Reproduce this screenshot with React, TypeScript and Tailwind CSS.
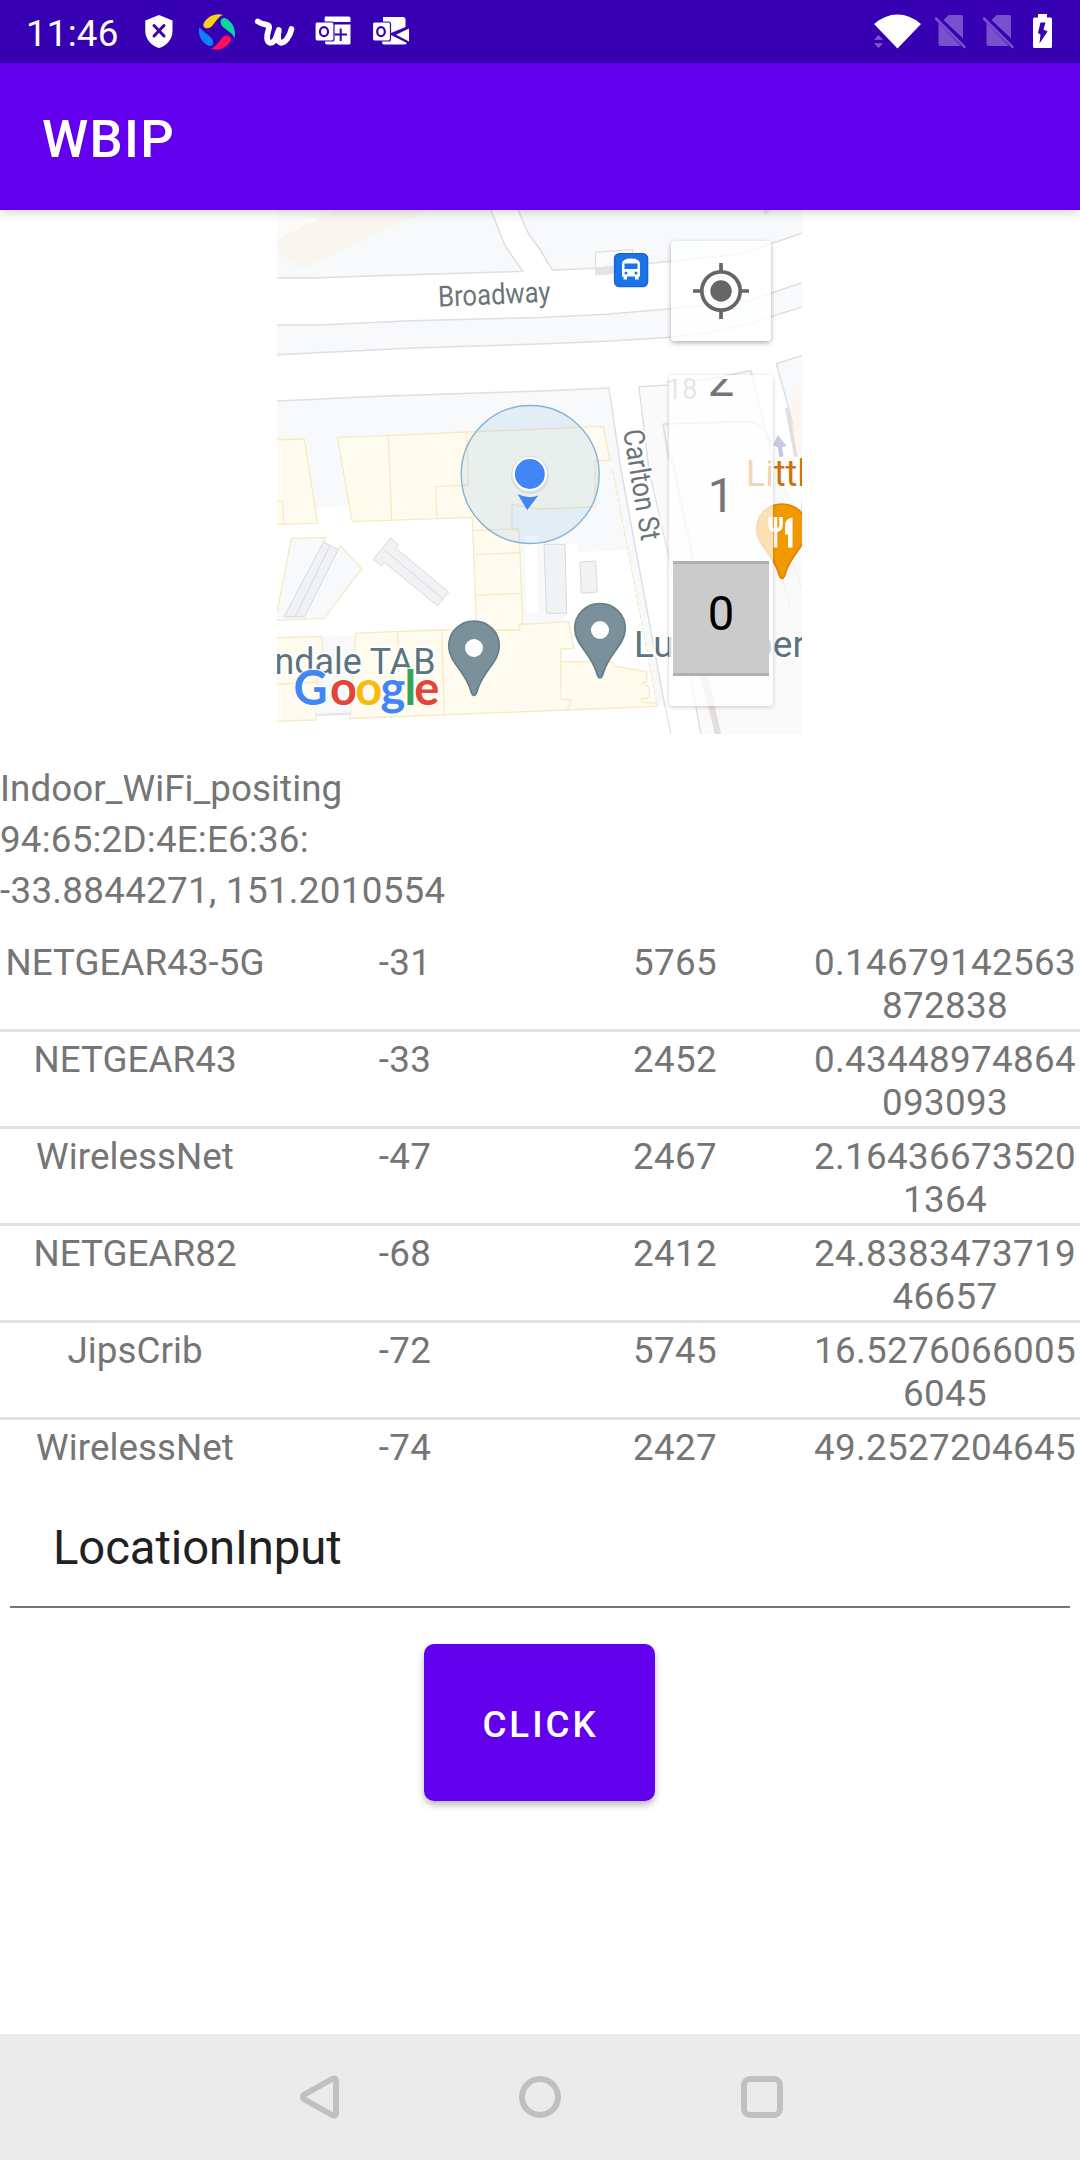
import React from "react";

const networks = [
  ["NETGEAR43-5G", "-31", "5765", "0.14679142563872838"],
  ["NETGEAR43", "-33", "2452", "0.43448974864093093"],
  ["WirelessNet", "-47", "2467", "2.164366735201364"],
  ["NETGEAR82", "-68", "2412", "24.838347371946657"],
  ["JipsCrib", "-72", "5745", "16.52760660056045"],
  ["WirelessNet", "-74", "2427", "49.2527204645"],
];

function StatusBar() {
  return (
    <div className="flex h-[63px] shrink-0 items-stretch bg-[#3700b3] pl-[26px] pr-[28px] text-white">
      <span className="w-[119px] pt-[11px] text-[36.75px] leading-[45px] tracking-[0.2px]">11:46</span>
      <svg className="h-[63px] w-[28px]" viewBox="145 0 28 63">
        <path d="M159 15 L172.500 20.500 V31 C172.500 39 167 45.500 159 48 C151 45.500 145.300 39 145.300 31 V20.500 Z" fill="#fff" />
        <path d="M154 25.500 L164 36 M164 25.500 L154 36" stroke="#3700b3" strokeWidth="3" strokeLinecap="round" />
      </svg>
      <svg className="ml-[26px] h-[63px] w-[36px]" viewBox="199 0 36 63">
        <path d="M203.500 24 C207 16 216 12.500 223 15 C218 16.500 214.500 24 211 27 C207 29.500 202.500 28 203.500 24Z" fill="#ffd01a" />
        <path d="M225 18 C232 21 236.500 29 234.500 38 C232.500 33 226 30 222 26 C219 21 221 17.500 225 18Z" fill="#0bd6a0" />
        <path d="M231 40 C228 47 219 52 211 48.500 C216 47 220 40 223 37 C227 34 231.500 36 231 40Z" fill="#ff0f5b" />
        <path d="M209 46 C202 43 197 35 199.500 27 C202 31 208 34.500 211.500 38 C215 43 213 46.500 209 46Z" fill="#0b80ff" />
      </svg>
      <svg className="ml-[20px] h-[63px] w-[40px]" viewBox="255 0 40 63" fill="none" stroke="#fff" strokeLinecap="round" strokeLinejoin="round">
        <path d="M257.800 21.500 Q262 24.500 267.500 25 Q270 25.500 268.500 30 C264 44.500 272 45.500 275.500 39 L278.800 30 C276 45 282 45 287 39 Q290.500 34 291.500 29" strokeWidth="5.800" />
      </svg>
      <svg className="ml-[20px] h-[63px] w-[37px]" viewBox="315 0 37 63">
        <path d="M325 16.500 h24 q1.500 0 1.500 1.500 v4 h-25.500 q-1 -2 0 -5.500 M325 24.500 h25.500 v18.500 q0 1.500 -1.500 1.500 h-22 q-2 0 -2 -2z" fill="#fff" />
        <path d="M334.500 34.500 h12.500 M340.700 28.500 v12.500" stroke="#3700b3" strokeWidth="2" />
        <rect x="315" y="22" width="19" height="19" rx="2" fill="#fff" stroke="#3700b3" strokeWidth="1.200" />
        <ellipse cx="324" cy="31.700" rx="4" ry="4.500" fill="none" stroke="#3700b3" strokeWidth="2.200" />
      </svg>
      <svg className="ml-[20px] h-[63px] w-[38px]" viewBox="372 0 38 63">
        <path d="M383 17 h20 q2.500 0 2.500 2.500 V27 L391 33 L383 24z M409 28.500 V41.500 L396 34.800z M382 41 L391 35 L407 43 Q406 44.500 404 44.500 H384 Q382 44.500 382 41Z" fill="#fff" />
        <rect x="372.500" y="22" width="18" height="19" rx="2" fill="#fff" stroke="#3700b3" strokeWidth="1.200" />
        <ellipse cx="381" cy="31.700" rx="3.800" ry="4.500" fill="none" stroke="#3700b3" strokeWidth="2.200" />
      </svg>
      <svg className="ml-auto h-[63px] w-[47px]" viewBox="874 0 47 63">
        <path d="M874 24 Q885 14.500 897.500 14.500 Q910 14.500 921 24 L897.500 48.500Z" fill="#fff" />
        <path d="M874 39.800 L878.500 35 L883 39.800Z M874 43.200 L878.500 48 L883 43.200Z" fill="#fff" fillOpacity=".35" />
      </svg>
      <Sim className="ml-[14px] h-[63px] w-[32px]" />
      <Sim className="ml-[16px] h-[63px] w-[32px]" />
      <svg className="ml-[18px] h-[63px] w-[19px]" viewBox="1033 0 19 63">
        <path d="M1038 14 h9 v3.500 h3.500 q1.500 0 1.500 1.500 V46.500 q0 1.500 -1.500 1.500 h-16 q-1.500 0 -1.500 -1.500 V19 q0 -1.500 1.500 -1.500 H1038Z" fill="#fff" />
        <path d="M1040.500 22.500 L1045.500 22.500 L1043.500 29.500 L1047.500 31.500 L1039.500 43.500 L1040.500 34.500 L1038 33Z" fill="#3700b3" />
      </svg>
    </div>
  );
}

function Sim({ className }: { className: string }) {
  return (
    <svg className={className} viewBox="935 0 32 63">
      <g fill="#fff" fillOpacity=".32">
        <path d="M943.500 20 L948 15.500 Q948.500 15 949.500 15 H961 Q963 15 963 17 V38.500Z" />
        <path d="M938.500 23 L960.500 45.500 Q960 46 959 46 H941 Q938.500 46 938.500 43.500Z" />
      </g>
      <path d="M936 18.500 L964.500 46.800" stroke="#fff" strokeOpacity=".32" strokeWidth="2.600" strokeLinecap="round" />
    </svg>
  );
}

function Pin({ x, y, fill, stroke }: { x: number; y: number; fill: string; stroke: string }) {
  return (
    <g transform={`translate(${x} ${y})`}>
      <path
        d="M0 1 C-14.500 1 -25.300 12 -25.300 26 C-25.300 42 -9 51 -3.500 70 Q-2 75.500 0 75.500 Q2 75.500 3.500 70 C9 51 25.300 42 25.300 26 C25.300 12 14.500 1 0 1Z"
        fill={fill}
        stroke={stroke}
        strokeWidth="1.600"
      />
    </g>
  );
}

function MapDrawing() {
  return (
    <svg className="block h-[524px] w-[525px]" viewBox="277 210 525 524" fontFamily="Roboto, sans-serif">
      <rect x="277" y="210" width="525" height="524" fill="#f8f9fb" />
      <path d="M277 210 H337 L277 240Z" fill="#fcfbf8" />
      <path d="M277 240 L337 210 H428 L390 228 L383 231 L300.700 269 L277 250Z" fill="#f9f6f0" />

      {/* roads */}
      <g fill="#fff" stroke="#dedfe3" strokeWidth="1.500">
        <path d="M270 278 L313 278 L377 275.700 L522.700 271.300 L505 245.700 L489 205 H516 L528 233 L540 249.500 L552.300 270.300 L595 268.300 L671 261.300 L740 254.300 L770.700 243.700 L810 230.500 V280 L770.700 293.300 L748 300.700 L671 308.700 L606.700 314.300 L540 317.500 L410 320.700 L320 325 L270 325Z" />
        <path d="M270 355 L413 348 L540 344 L606.700 341.300 L671 337.300 L713 332 L753 323.300 L770.700 316.700 L810 304.500 V353 L776.300 363.700 L806 470 L800 520 L775 470 L751 370.700 L720 376.700 L668 385 L639 386.700 L649 470 L669 557 L702 740 H672 L665 706.700 L621 470 L609 388 L540 391 L380 396.300 L270 401.300Z" />
      </g>
      <path d="M639.800 387.500 L668 386 L720 377.700 L750.300 371.700 L774 470 L800 530 V734 H702 L669 557 L650 470Z" fill="#fafafa" />
      <path d="M775 470 L810 530 V734 H702 L690 660Z" fill="#fafafa" />
      <path d="M700 675 H708 L721 734 H715Z M785 408 L789 407.700 L798 456.700 L794 456.700Z" fill="#e4dfdb" />
      <path d="M672 458 L693 560 M693 560 L708 675" stroke="#f0e8e4" strokeWidth="3" fill="none" />
      <path d="M802 387 Q788 398 790 408 L800 460 H802Z" fill="#fdf5ef" />
      <path d="M663 424 L748 421.500 Q765 423 772 445 M663 424 L669 460" stroke="#e8e2dc" fill="none" strokeWidth="2" />
      <path d="M760 500 L790 605 M788 545 L802 590" stroke="#f0eeec" fill="none" />

      {/* open ground */}
      <path d="M277 524 L317.700 523.300 L315.700 507.500 L348.500 505.700 L352.300 521.700 L472.300 517.300 L477 632 L277 638Z M565 544 H577 V552 L628 550 L657 705 L665 706.700 L670 734 H277 V718 L540 710 L566 613Z M525 536 L537 536 L538 613 L526 613Z" fill="#fff" />

      {/* buildings */}
      <g fill="#fffbef" stroke="#f7e9c3" strokeWidth="1.300" strokeLinejoin="round">
        <path d="M270 440 L304.300 439 L317.700 523.300 L270 524.500Z M277 501.300 H282.700 L283.700 524.300" />
        <path d="M337.300 437.300 L388 435.700 L467 432 L603.300 426.300 L610 460 L595 461 V507 L540 509 L512 504.500 V529 L519 530 L522.700 623.300 L519.500 624.300 L519.500 630 L476.700 631 L472.300 517.300 L352.300 521.700Z" />
        <path d="M388.300 435.700 L391.700 520 M436.700 518.300 L435.700 486.700 L468.500 485 L466.700 432 M472.700 530.700 L519 528.700 M474 554.700 L520 552.700 M476 595.300 L521 593.300" />
        <path d="M270 638 L321.700 636.300 L323 652 L317 685 L315.700 720 L270 721.300Z M277 684.500 L317 682" />
        <path d="M355.700 633.300 L397.700 631.300 L441.700 630 L519.500 630 L520 624.500 L540 623.300 L568.700 621.700 L573.700 648.300 L560.700 649 V661.300 L612.700 662 L614 666 L646.700 671.700 V681.700 L642 683 L649.300 687.300 V697.700 L641.300 699 L642 702.300 L656 703 L657.300 706.300 L566 710 L350 718.500Z M397.700 631.300 L398.500 672 M441.700 630 L444.300 715 M560.700 661.300 L561.300 699.300 L570.700 700 L570 706 L566 710" />
        <path d="M612.700 470 L628 550 L657 705" fill="none" strokeDasharray="5 2" />
        <path d="M291.300 538.300 L325.700 537.300 L323.300 542.700 L338.300 550 L340.700 546 L361.700 569 L324 618.300 L272 620.500 L277.500 610Z" fill="#f8f9fb" />
      </g>
      <path d="M317 686 L351 680 L350 714 L316 715Z" fill="#f8f9fb" />
      <path d="M316 715 L350 713.500" stroke="#e4e5e8" strokeWidth="2" />
      <g fill="#f1f2f4" stroke="#d9dadd">
        <path d="M323.300 542.300 L338.300 549.300 L304.700 616.700 L284 617Z M330 545.300 L295.300 616.700" />
        <path d="M390.700 538 L398.300 544.700 L395.700 548 L448.700 592 L437.300 605.700 L384.700 562.700 L381.300 566 L373.300 559.300Z M383.300 549 L442.700 598.700" />
        <path d="M544 544.300 H565 L566.700 613.300 H546.500Z M580 562 L595.700 561 L597.300 592 L581.300 593.300Z" />
        <path d="M595.500 268 V252.300 L632.500 249.500 V258" fill="#fafbfb" />
      </g>
      <path d="M595 267 H616 V274 L595 275.500Z M762 210 h8 l-4 5Z" fill="#e2e3e4" />

      {/* street labels */}
      <g fill="#6b7579" stroke="#fff" strokeWidth="4" strokeLinejoin="round" paintOrder="stroke" fontSize="29">
        <text transform="translate(438.500 306.800) rotate(-2.600)" textLength="112.500" lengthAdjust="spacingAndGlyphs">Broadway</text>
        <text transform="translate(623 431) rotate(80.600)" textLength="112" lengthAdjust="spacingAndGlyphs">Carlton St</text>
        <text x="666.500" y="399" fill="#aaa" textLength="31" lengthAdjust="spacingAndGlyphs">18</text>
      </g>

      {/* bus stop */}
      <rect x="614.600" y="253.600" width="33" height="33" rx="5" fill="#1a73e8" stroke="#1765cf" strokeWidth="1.400" />
      <path d="M622 264 Q622 258.500 631 258.500 Q640 258.500 640 264 V276.500 H638.700 V279.500 H635 V276.500 H627 V279.500 H623.500 V276.500 H622Z" fill="#fff" />
      <path d="M624.500 263.500 H637.500 V269 H624.500Z" fill="#1a73e8" />
      <circle cx="626" cy="273" r="1.500" fill="#1a73e8" />
      <circle cx="636" cy="273" r="1.500" fill="#1a73e8" />

      {/* current position */}
      <circle cx="530.200" cy="474.500" r="69" fill="#4b9fdc" fillOpacity=".13" stroke="#86b2d8" strokeWidth="1.400" />
      <circle cx="530" cy="475" r="19" fill="#000" fillOpacity=".08" />
      <circle cx="529.800" cy="474" r="17.300" fill="#fff" />
      <circle cx="529.800" cy="474" r="15" fill="#4285f4" />
      <path d="M517.500 494 Q528 499.500 538.300 495.500 L527.200 510Z" fill="#4285f4" />

      {/* places */}
      <Pin x={474} y={620} fill="#7a909b" stroke="#5f7f8b" />
      <circle cx="474" cy="648" r="9" fill="#fff" />
      <Pin x={600} y={602.500} fill="#7a909b" stroke="#5f7f8b" />
      <circle cx="600" cy="630" r="9" fill="#fff" />
      <Pin x={782} y={503} fill="#f29900" stroke="#e37f00" />
      <path d="M770 517 V525 Q770 530 775.500 530.500 V547.500 M775.500 517 V530 M781 517 V525 Q781 530 775.500 530.500" fill="none" stroke="#fff" strokeWidth="3.600" />
      <path d="M792.500 517.500 V547.500 H788 V534.500 H785 V525 Q785.500 518 792.500 517.500Z" fill="#fff" />
      <path d="M777.700 435 L786.700 446 L782 447 L783.500 456.500 L779 457 L778 447.500 L773.300 445Z" fill="#c5c9dd" />
      <g fontSize="37" stroke="#fff" strokeWidth="4" strokeLinejoin="round" paintOrder="stroke">
        <g fill="#5b7580">
          <text x="274.500" y="673.800" textLength="161" lengthAdjust="spacingAndGlyphs">ndale TAB</text>
          <text x="634" y="656.500">Lu</text>
          <text x="752" y="656.500">ber</text>
        </g>
        <text x="746" y="486" fill="#d1700d" textLength="60" lengthAdjust="spacingAndGlyphs">Littl</text>
      </g>
      <text
        x="293.500 330 355.200 380.500 404.500 414.200"
        y="705"
        fontFamily="Lato, sans-serif"
        fontWeight="700"
        fontSize="47"
        stroke="#fff"
        strokeOpacity=".8"
        strokeWidth="3"
        paintOrder="stroke"
        strokeLinejoin="round"
      >
        <tspan fill="#4285f4">G</tspan>
        <tspan fill="#e2463a">o</tspan>
        <tspan fill="#f8bb0c">o</tspan>
        <tspan fill="#4285f4">g</tspan>
        <tspan fill="#35a455">l</tspan>
        <tspan fill="#e2463a">e</tspan>
      </text>
    </svg>
  );
}

function MapPanel() {
  return (
    <div className="relative mr-[278px] ml-[277px] h-[524px] w-[525px] shrink-0 overflow-hidden">
      <MapDrawing />
      <button className="absolute top-[31px] left-[394px] flex h-[100px] w-[100px] items-center justify-center rounded-[4px] bg-white/75 shadow-[0_2px_5px_rgba(0,0,0,0.3)]">
        <svg className="h-[56px] w-[56px]" viewBox="-28 -28 56 56">
          <circle r="19.200" fill="none" stroke="#666" strokeWidth="3.700" />
          <circle r="10.700" fill="#666" />
          <path d="M-28 0 H-19 M19 0 H28 M0 -28 V-19 M0 19 V28" stroke="#666" strokeWidth="3.700" />
        </svg>
      </button>
      <div className="absolute top-[165px] left-[392px] flex h-[331px] w-[104px] flex-col items-center rounded-[4px] bg-white/70 pt-[4px] text-[47.25px] text-[#757575] shadow-[0_1px_4px_rgba(0,0,0,0.2)]">
        <div className="flex h-[66px] w-full items-start justify-center overflow-hidden">
          <span className="-mt-[27px] leading-[56px]">2</span>
        </div>
        <div className="flex h-[116px] w-full items-center justify-center pb-[15px] leading-[56px]">1</div>
        <div className="flex h-[115px] w-[96px] shrink-0 items-center justify-center border-y-[3px] border-[#b2afac] bg-[#cbcbcb] pb-[9px] leading-[56px] text-black">0</div>
      </div>
    </div>
  );
}

export default function App() {
  return (
    <div className="flex h-[2160px] w-[1080px] flex-col overflow-hidden bg-white font-[Roboto,sans-serif] text-[36.75px] text-[#757575]">
      <StatusBar />
      <header className="z-10 flex h-[147px] shrink-0 items-center bg-[#6200ee] px-[42px] pt-[5px] text-[52.5px] font-medium tracking-[1.3px] text-white shadow-[0_3px_9px_rgba(0,0,0,0.16)]">
        WBIP
      </header>
      <MapPanel />
      <div className="pt-[29px] leading-[51px]">
        <p className="tracking-[0.08px]">Indoor_WiFi_positing</p>
        <p className="tracking-[0.2px]">94:65:2D:4E:E6:36:</p>
        <p className="tracking-[0.3px]">-33.8844271, 151.2010554</p>
      </div>
      <div className="mt-[19px] h-[535px] shrink-0 overflow-hidden leading-[43px] tracking-[0.35px]">
        {networks.map((row, i) => (
          <div key={i} className="grid h-[97px] grid-cols-4 border-b-[3px] border-[#e0e0e0] pt-[6px] text-center">
            {row.map((cell, j) => (
              <span key={j} className="break-all first:tracking-[0.05px]">{cell}</span>
            ))}
          </div>
        ))}
      </div>
      <div className="mx-[10px] flex h-[138px] shrink-0 items-center border-b-[2px] border-[#757575] pt-[20px] pl-[43px] text-[47.25px] tracking-[-0.1px] text-[#212121]">
        LocationInput
      </div>
      <button className="mt-[36px] ml-[424px] flex h-[157px] w-[231px] shrink-0 items-center justify-center rounded-[10px] bg-[#6200ee] pt-[4px] pl-[2px] font-medium tracking-[2.95px] text-white shadow-[0_4px_7px_rgba(0,0,0,0.28)]">
        CLICK
      </button>
      <nav className="mt-auto flex h-[126px] shrink-0 items-center justify-between bg-[#ebebeb] pr-[297px] pl-[300px]">
        <svg className="h-[44px] w-[40px]" viewBox="0 0 40 44" fill="none" stroke="#c0c0c0" strokeWidth="6" strokeLinejoin="round">
          <path d="M3 22 Q3 20.500 4.500 19.500 L32 4 Q36 2.500 36 6 V38 Q36 41.500 32 40 L4.500 24.500 Q3 23.500 3 22Z" />
        </svg>
        <svg className="mr-[2px] h-[44px] w-[42px]" viewBox="0 0 42 44" fill="none" stroke="#c0c0c0" strokeWidth="6">
          <circle cx="21" cy="22" r="18" />
        </svg>
        <svg className="h-[44px] w-[42px]" viewBox="0 0 42 44" fill="none" stroke="#c0c0c0" strokeWidth="6">
          <rect x="3" y="4" width="36" height="36" rx="6" />
        </svg>
      </nav>
    </div>
  );
}
